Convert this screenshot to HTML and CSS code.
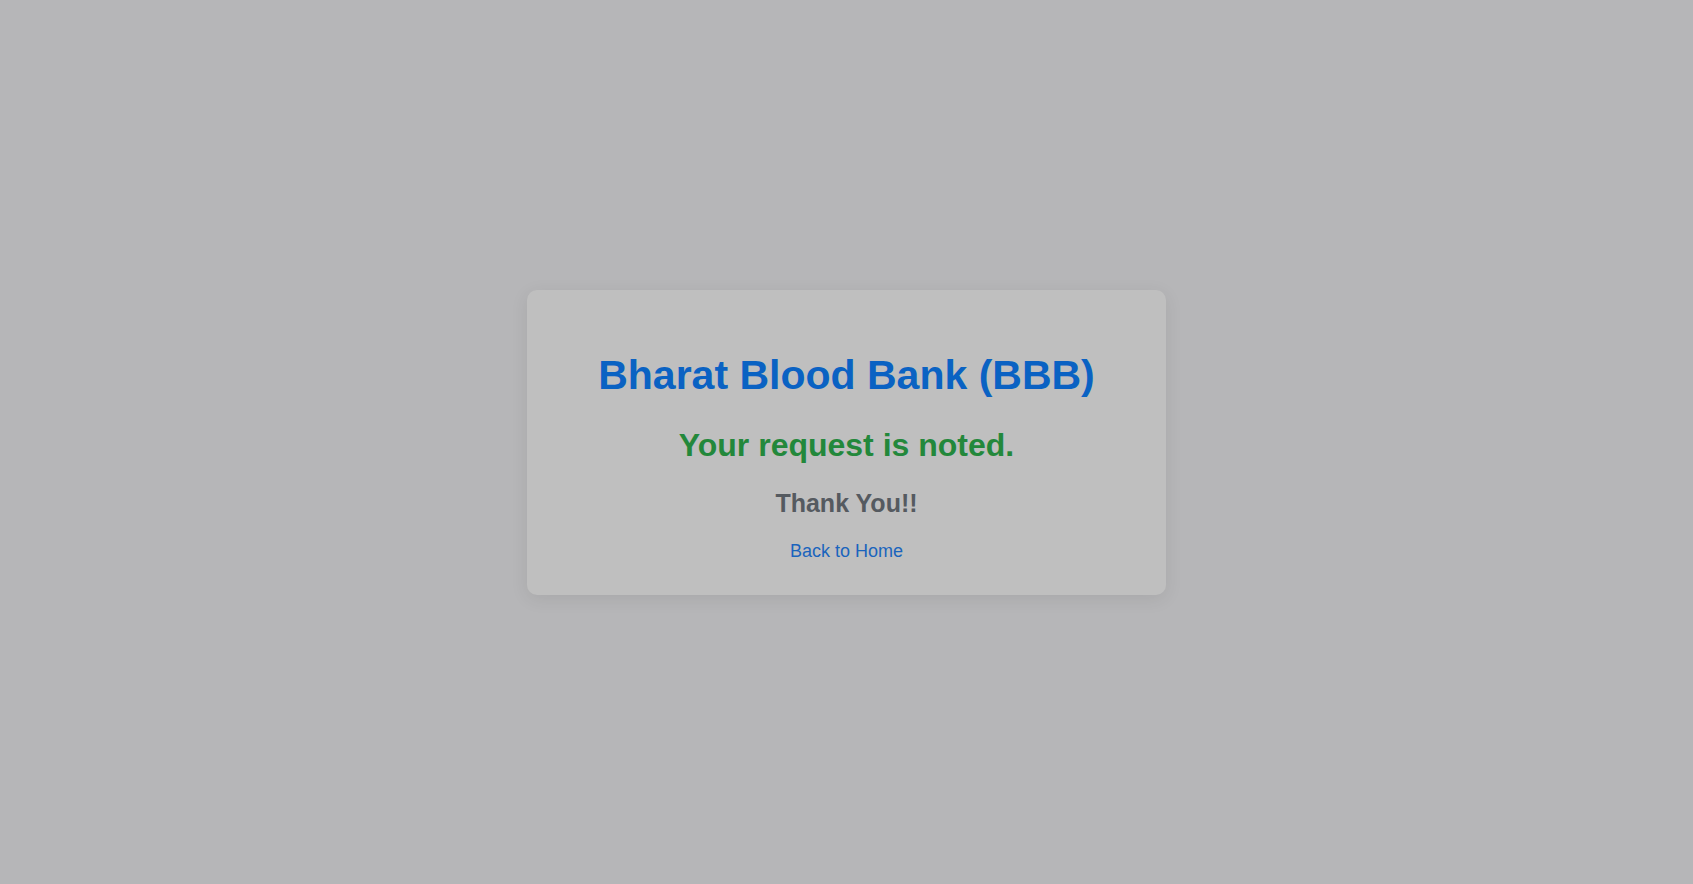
FILE: index.html
```html
<!DOCTYPE html>
<html lang="en">
<head>
<meta charset="utf-8">
<title>Thank You</title>
<link rel="stylesheet" href="styles.css">
</head>
<body>
<main class="page">
  <section class="card">
    <h1 class="title">Bharat Blood Bank (BBB)</h1>
    <h2 class="notice">Your request is noted.</h2>
    <h3 class="thanks">Thank You!!</h3>
    <a class="home-link" href="#">Back to Home</a>
  </section>
</main>
</body>
</html>
```

FILE: styles.css
```css
html, body {
  margin: 0;
  padding: 0;
  height: 100%;
}
body {
  background: #b6b6b8;
  font-family: "Liberation Sans", Arial, sans-serif;
}
.page {
  height: 100%;
  display: flex;
  align-items: center;
  justify-content: center;
}
.card {
  width: 639px;
  box-sizing: border-box;
  height: 305px;
  background: #bfbfbf;
  border-radius: 10px;
  box-shadow: 0 4px 18px rgba(0, 0, 0, 0.08);
  display: flex;
  flex-direction: column;
  align-items: center;
  padding-top: 61px;
  text-align: center;
}
.title {
  margin: 0;
  font-size: 41px;
  line-height: 49px;
  font-weight: bold;
  color: #0a62c3;
}
.notice {
  margin: 26px 0 0;
  font-size: 32px;
  line-height: 38px;
  font-weight: bold;
  color: #23883b;
}
.thanks {
  margin: 24px 0 0;
  font-size: 25px;
  line-height: 30px;
  font-weight: bold;
  color: #555a60;
}
.home-link {
  margin-top: 22px;
  font-size: 18px;
  line-height: 22px;
  color: #1a64bd;
  text-decoration: none;
}
```
